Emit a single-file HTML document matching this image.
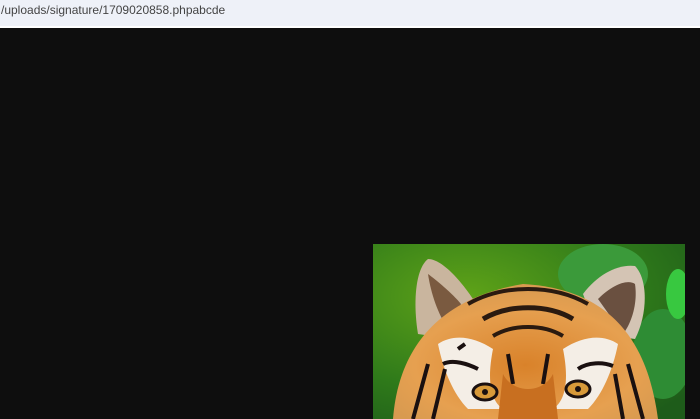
<!DOCTYPE html>
<html><head><style>
html,body{margin:0;padding:0;width:700px;height:419px;overflow:hidden;background:#0e0e0e;}
.bar{position:absolute;left:0;top:0;width:700px;height:26px;background:#eef1f8;border-bottom:2px solid #fff;}
.bar span{position:absolute;left:1px;top:3px;font:12px "Liberation Sans",sans-serif;color:#444;}
svg{position:absolute;left:373px;top:244px;}
</style></head><body>
<div class="bar"><span>/uploads/signature/1709020858.phpabcde</span></div>
<svg width="312" height="175" viewBox="0 0 312 175">
<defs>
<radialGradient id="bg" cx="0.3" cy="0.3" r="0.9"><stop offset="0" stop-color="#5fa318"/><stop offset="0.6" stop-color="#2f7a1a"/><stop offset="1" stop-color="#1e5c1a"/></radialGradient>
<radialGradient id="hd" cx="0.5" cy="0.6" r="0.6"><stop offset="0" stop-color="#d9822a"/><stop offset="0.7" stop-color="#e6a050"/><stop offset="1" stop-color="#d89a50"/></radialGradient>
</defs>
<rect width="312" height="175" fill="url(#bg)"/>
<ellipse cx="230" cy="30" rx="45" ry="30" fill="#3b9a3a"/>
<ellipse cx="290" cy="110" rx="30" ry="45" fill="#2e8c34"/>
<ellipse cx="305" cy="50" rx="12" ry="25" fill="#38c840"/>
<path d="M45,90 C40,60 42,25 55,15 C70,15 90,40 100,55 L80,95Z" fill="#c9b59e"/>
<path d="M55,30 C62,35 80,50 88,60 L75,85 C65,70 58,50 55,30Z" fill="#7a5a40"/>
<path d="M210,50 C225,30 245,20 262,22 C275,35 275,70 262,95 L225,90Z" fill="#d4c4b4"/>
<path d="M225,55 C240,40 255,35 262,40 C265,60 258,80 250,90Z" fill="#6a5040"/>
<path d="M20,175 C25,110 60,55 150,40 C240,45 275,100 285,175Z" fill="url(#hd)"/>
<path d="M95,60 C130,40 180,40 215,60" stroke="#2a1a10" stroke-width="4" fill="none"/>
<path d="M110,75 C135,60 175,60 200,75" stroke="#2a1a10" stroke-width="5" fill="none"/>
<path d="M120,92 C140,80 170,80 190,92" stroke="#2a1a10" stroke-width="4" fill="none"/>
<path d="M65,100 C80,90 100,92 120,105 C115,130 115,155 130,165 L95,165 C80,150 70,125 65,100Z" fill="#f4eee6"/>
<path d="M245,100 C230,90 210,92 190,105 C195,130 195,155 180,165 L215,165 C230,150 240,125 245,100Z" fill="#f4eee6"/>
<path d="M85,105 L92,100 M70,120 C80,115 95,120 105,125" stroke="#1a1010" stroke-width="4" fill="none"/>
<path d="M205,125 C215,118 230,118 240,122" stroke="#1a1010" stroke-width="4" fill="none"/>
<path d="M40,175 L55,120 M60,175 L72,125 M270,175 L255,120 M250,175 L242,130 M135,110 L140,140 M175,110 L170,140" stroke="#1a1010" stroke-width="4" fill="none"/>
<ellipse cx="112" cy="148" rx="12" ry="8" fill="#d89a3a" stroke="#1a1010" stroke-width="3"/>
<ellipse cx="205" cy="145" rx="12" ry="8" fill="#d89a3a" stroke="#1a1010" stroke-width="3"/>
<circle cx="112" cy="148" r="3" fill="#1a1010"/><circle cx="205" cy="145" r="3" fill="#1a1010"/>
<path d="M130,130 C140,150 170,150 180,130 L185,175 L125,175Z" fill="#c86f20"/>
</svg>
</body></html>
